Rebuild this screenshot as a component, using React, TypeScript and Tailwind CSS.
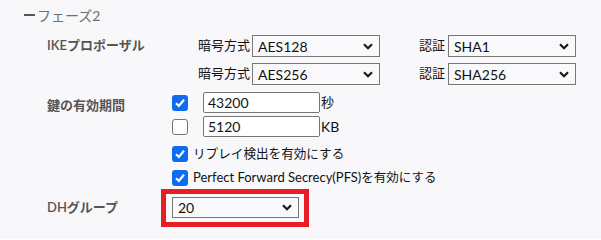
import React from "react";

const FONT = { fontFamily: 'Lato, "Noto Sans CJK JP", sans-serif' };

function Chevron() {
  return (
    <svg width="10" height="7" viewBox="0 0 10 7" className="shrink-0">
      <polyline points="1,1.2 5,5.2 9,1.2" fill="none" stroke="#1a1a1a" strokeWidth="2.2" />
    </svg>
  );
}

function FakeSelect({ value, w = "w-[128px]", h = "h-[22px]" }: { value: string; w?: string; h?: string }) {
  return (
    <div className={`${w} ${h} flex items-center justify-between border border-[#777777] bg-[#f9f9fb] pl-[5px] pr-[6px] text-[14px] text-[#111]`}>
      <span>{value}</span>
      <Chevron />
    </div>
  );
}

function Checkbox({ checked }: { checked: boolean }) {
  return checked ? (
    <div className="w-[16px] h-[16px] rounded-[3px] bg-[#0f6cf0] flex items-center justify-center shrink-0">
      <svg width="12" height="12" viewBox="0 0 12 12">
        <polyline points="2,6.3 4.8,9 10,2.8" fill="none" stroke="#fff" strokeWidth="2.2" />
      </svg>
    </div>
  ) : (
    <div className="w-[16px] h-[16px] rounded-[3px] bg-white border border-[#767676] shrink-0" />
  );
}

function TextBox({ value }: { value: string }) {
  return (
    <div className="w-[117px] h-[21px] flex items-center border border-[#767676] rounded-[2px] bg-white pl-[4px] text-[14px] text-[#111]">
      {value}
    </div>
  );
}

export default function App() {
  return (
    <div className="w-[601px] h-[239px] bg-[#f8f8fb] overflow-hidden" style={FONT}>
      {/* header */}
      <div className="h-[30px] flex items-center pl-[24px]">
        <div className="w-[11px] h-[2.5px] bg-[#555]" />
        <span className="ml-[2px] text-[14px] text-[#6e6e6e]">フェーズ2</span>
      </div>

      <div className="pl-[47px]">
        {/* IKE row 1 */}
        <div className="mt-[5px] h-[22px] flex items-center">
          <div className="w-[125px] text-[13px] font-semibold text-[#555]">IKEプロポーザル</div>
          <div className="w-[78px] text-right text-[13px] text-[#111]">暗号方式</div>
          <div className="ml-[2px]"><FakeSelect value="AES128" /></div>
          <div className="w-[68px] text-right text-[13px] text-[#111] pr-[3px]">認証</div>
          <FakeSelect value="SHA1" />
        </div>
        {/* IKE row 2 */}
        <div className="mt-[6px] h-[22px] flex items-center">
          <div className="w-[125px]" />
          <div className="w-[78px] text-right text-[13px] text-[#111]">暗号方式</div>
          <div className="ml-[2px]"><FakeSelect value="AES256" /></div>
          <div className="w-[68px] text-right text-[13px] text-[#111] pr-[3px]">認証</div>
          <FakeSelect value="SHA256" />
        </div>

        {/* key lifetime */}
        <div className="mt-[7px] flex">
          <div className="w-[125px] pt-[4px] text-[13px] font-semibold text-[#555]">鍵の有効期間</div>
          <div className="flex flex-col gap-[3px]">
            <div className="h-[21px] flex items-center">
              <Checkbox checked />
              <div className="ml-[15px]"><TextBox value="43200" /></div>
              <span className="ml-[1px] text-[13px] text-[#111]">秒</span>
            </div>
            <div className="h-[21px] flex items-center">
              <Checkbox checked={false} />
              <div className="ml-[15px]"><TextBox value="5120" /></div>
              <span className="ml-[1px] text-[14px] text-[#111]">KB</span>
            </div>
          </div>
        </div>

        {/* checkbox rows */}
        <div className="mt-[9px] h-[16px] flex items-center">
          <div className="w-[125px]" />
          <Checkbox checked />
          <span className="ml-[5px] text-[12.6px] text-[#111]">リプレイ検出を有効にする</span>
        </div>
        <div className="mt-[8px] h-[16px] flex items-center">
          <div className="w-[125px]" />
          <Checkbox checked />
          <span className="ml-[5px] text-[13px] text-[#111]">
            Perfect Forward Secrecy(PFS)<span className="text-[12.5px]">を有効にする</span>
          </span>
        </div>

        {/* DH group */}
        <div className="mt-[3px] flex items-center">
          <div className="w-[114px] text-[13px] font-semibold text-[#555]">DHグループ</div>
          <div className="border-[5px] border-[#e61e26] pl-[6px] pr-[5px] pt-[3px] pb-[4px]">
            <FakeSelect value="20" w="w-[127px]" h="h-[21px]" />
          </div>
        </div>
      </div>
    </div>
  );
}
